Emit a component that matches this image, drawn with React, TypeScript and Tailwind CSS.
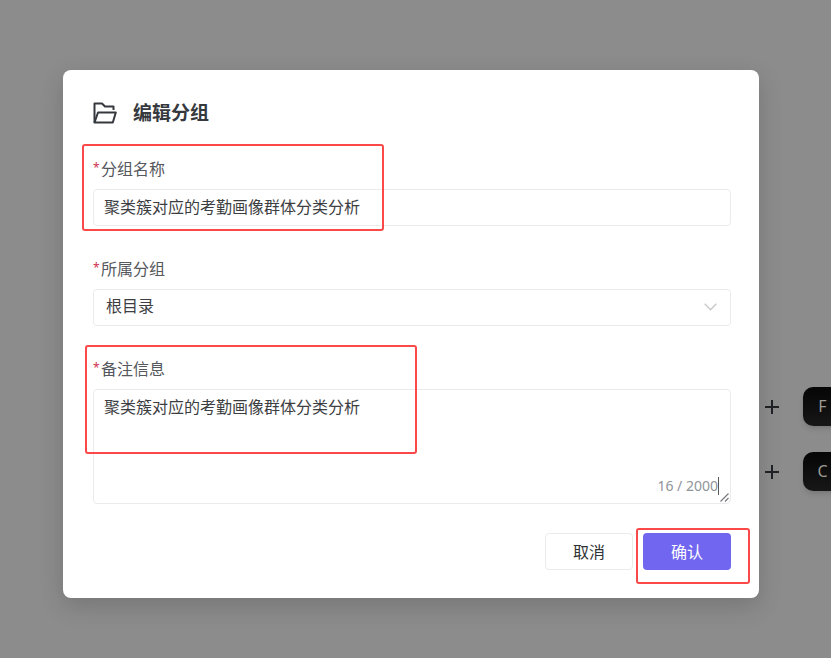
import type { ReactNode } from "react";

function Highlight({ className }: { className: string }) {
  return (
    <span
      aria-hidden="true"
      className={`pointer-events-none absolute z-10 rounded-[3px] border-2 border-[#fb4848] ${className}`}
    />
  );
}

function Field({ id, label, children }: { id: string; label: string; children: ReactNode }) {
  return (
    <div className="relative flex flex-col gap-2">
      <label htmlFor={id} className="flex gap-[2px] leading-6 text-[#55585d]">
        <span className="w-[6px] text-[12px] leading-[22px] text-[#d0304f]">*</span>
        {label}
      </label>
      {children}
    </div>
  );
}

function KeyRow({ letter }: { letter: string }) {
  return (
    <div className="flex h-[39px] items-center gap-6">
      <svg className="size-[14px] shrink-0 text-[#202124]" viewBox="0 0 14 14" fill="none" stroke="currentColor" strokeWidth="2">
        <path d="M7 0v14M0 7h14" />
      </svg>
      <kbd className="flex h-full w-[39px] shrink-0 items-center justify-center rounded-[10px] bg-linear-to-b from-[#060606] to-[#171717] pb-[2px] font-['Noto_Sans',sans-serif] text-[16px] text-[#9c9a96] shadow-md">
        {letter}
      </kbd>
    </div>
  );
}

const controlClass = "w-full rounded border border-[#ebebeb] bg-white text-[#3c3e42] outline-none";

export default function App() {
  return (
    <main className="flex min-h-screen items-start overflow-hidden bg-[#8c8c8c] pt-[70px] pl-[63px] font-['Noto_Sans','Noto_Sans_CJK_SC',sans-serif] text-[16px]">
      <form
        role="dialog"
        aria-labelledby="dialog-title"
        onSubmit={(e) => e.preventDefault()}
        className="min-w-0 flex-1 rounded-lg bg-white pt-[29px] pr-7 pb-7 pl-[30px] shadow-[0_8px_24px_rgba(0,0,0,0.16)]"
      >
        <header className="mb-[30px] flex h-7 items-center gap-4 text-[#35393e]">
          <svg className="h-[22px] w-6" viewBox="0 0 24 22" fill="none" stroke="currentColor" strokeWidth="2" strokeLinejoin="round">
            <path d="M1.5 20.5V1.5H9L12 4.5H20.5V8" />
            <path d="M1.5 20.5L5 10.5H22.8L19.8 20.5Z" />
          </svg>
          <h1 id="dialog-title" className="text-[19px] leading-7 font-bold">编辑分组</h1>
        </header>

        <div className="flex flex-col gap-[31px]">
          <Field id="name" label="分组名称">
            <input id="name" defaultValue="聚类簇对应的考勤画像群体分类分析" className={`${controlClass} h-[37px] px-[10px] pb-[3px]`} />
            <Highlight className="-top-[13px] -left-[11px] h-[87px] w-[302px]" />
          </Field>

          <Field id="parent" label="所属分组">
            <div className="relative">
              <select id="parent" className={`${controlClass} block h-[37px] appearance-none px-3 pb-[3px]`}>
                <option>根目录</option>
              </select>
              <svg
                className="pointer-events-none absolute top-[14px] right-[14px] h-2 w-[13px] text-[#c8c8c8]"
                viewBox="0 0 13 8"
                fill="none"
                stroke="currentColor"
                strokeWidth="1.3"
              >
                <path d="M0.7 0.8L6.5 6.8L12.3 0.8" />
              </svg>
            </div>
          </Field>

          <Field id="remark" label="备注信息">
            <div className="relative">
              <textarea
                id="remark"
                defaultValue="聚类簇对应的考勤画像群体分类分析"
                className={`${controlClass} block h-[115px] resize-none px-[10px] py-[5px] leading-6`}
              />
              <span className="absolute right-[12px] bottom-[9px] border-r border-[#55585d] text-[14px] leading-[18px] text-[#909399]">
                16 / 2000
              </span>
              <svg
                className="absolute right-[2px] bottom-[2px] size-[9px] text-[#77797c]"
                viewBox="0 0 9 9"
                fill="none"
                stroke="currentColor"
                strokeWidth="1.1"
              >
                <path d="M0.5 8.5L8.5 0.5M5 8.5L8.5 5" />
              </svg>
            </div>
            <Highlight className="-top-3 -left-2 h-[109px] w-[332px]" />
          </Field>
        </div>

        <footer className="mt-[29px] flex justify-end gap-[10px]">
          <button type="button" className="h-[37px] w-[88px] rounded border border-[#ebebeb] bg-white text-[#303236]">
            取消
          </button>
          <div className="relative">
            <button type="submit" className="block h-[37px] w-[88px] rounded bg-[#7166f0] text-white">
              确认
            </button>
            <Highlight className="-top-[5px] -left-[7px] h-14 w-[114px]" />
          </div>
        </footer>
      </form>

      <aside className="flex w-[72px] shrink-0 flex-col gap-[26px] pt-[317px] pl-[6px]">
        <KeyRow letter="F" />
        <KeyRow letter="C" />
      </aside>
    </main>
  );
}
